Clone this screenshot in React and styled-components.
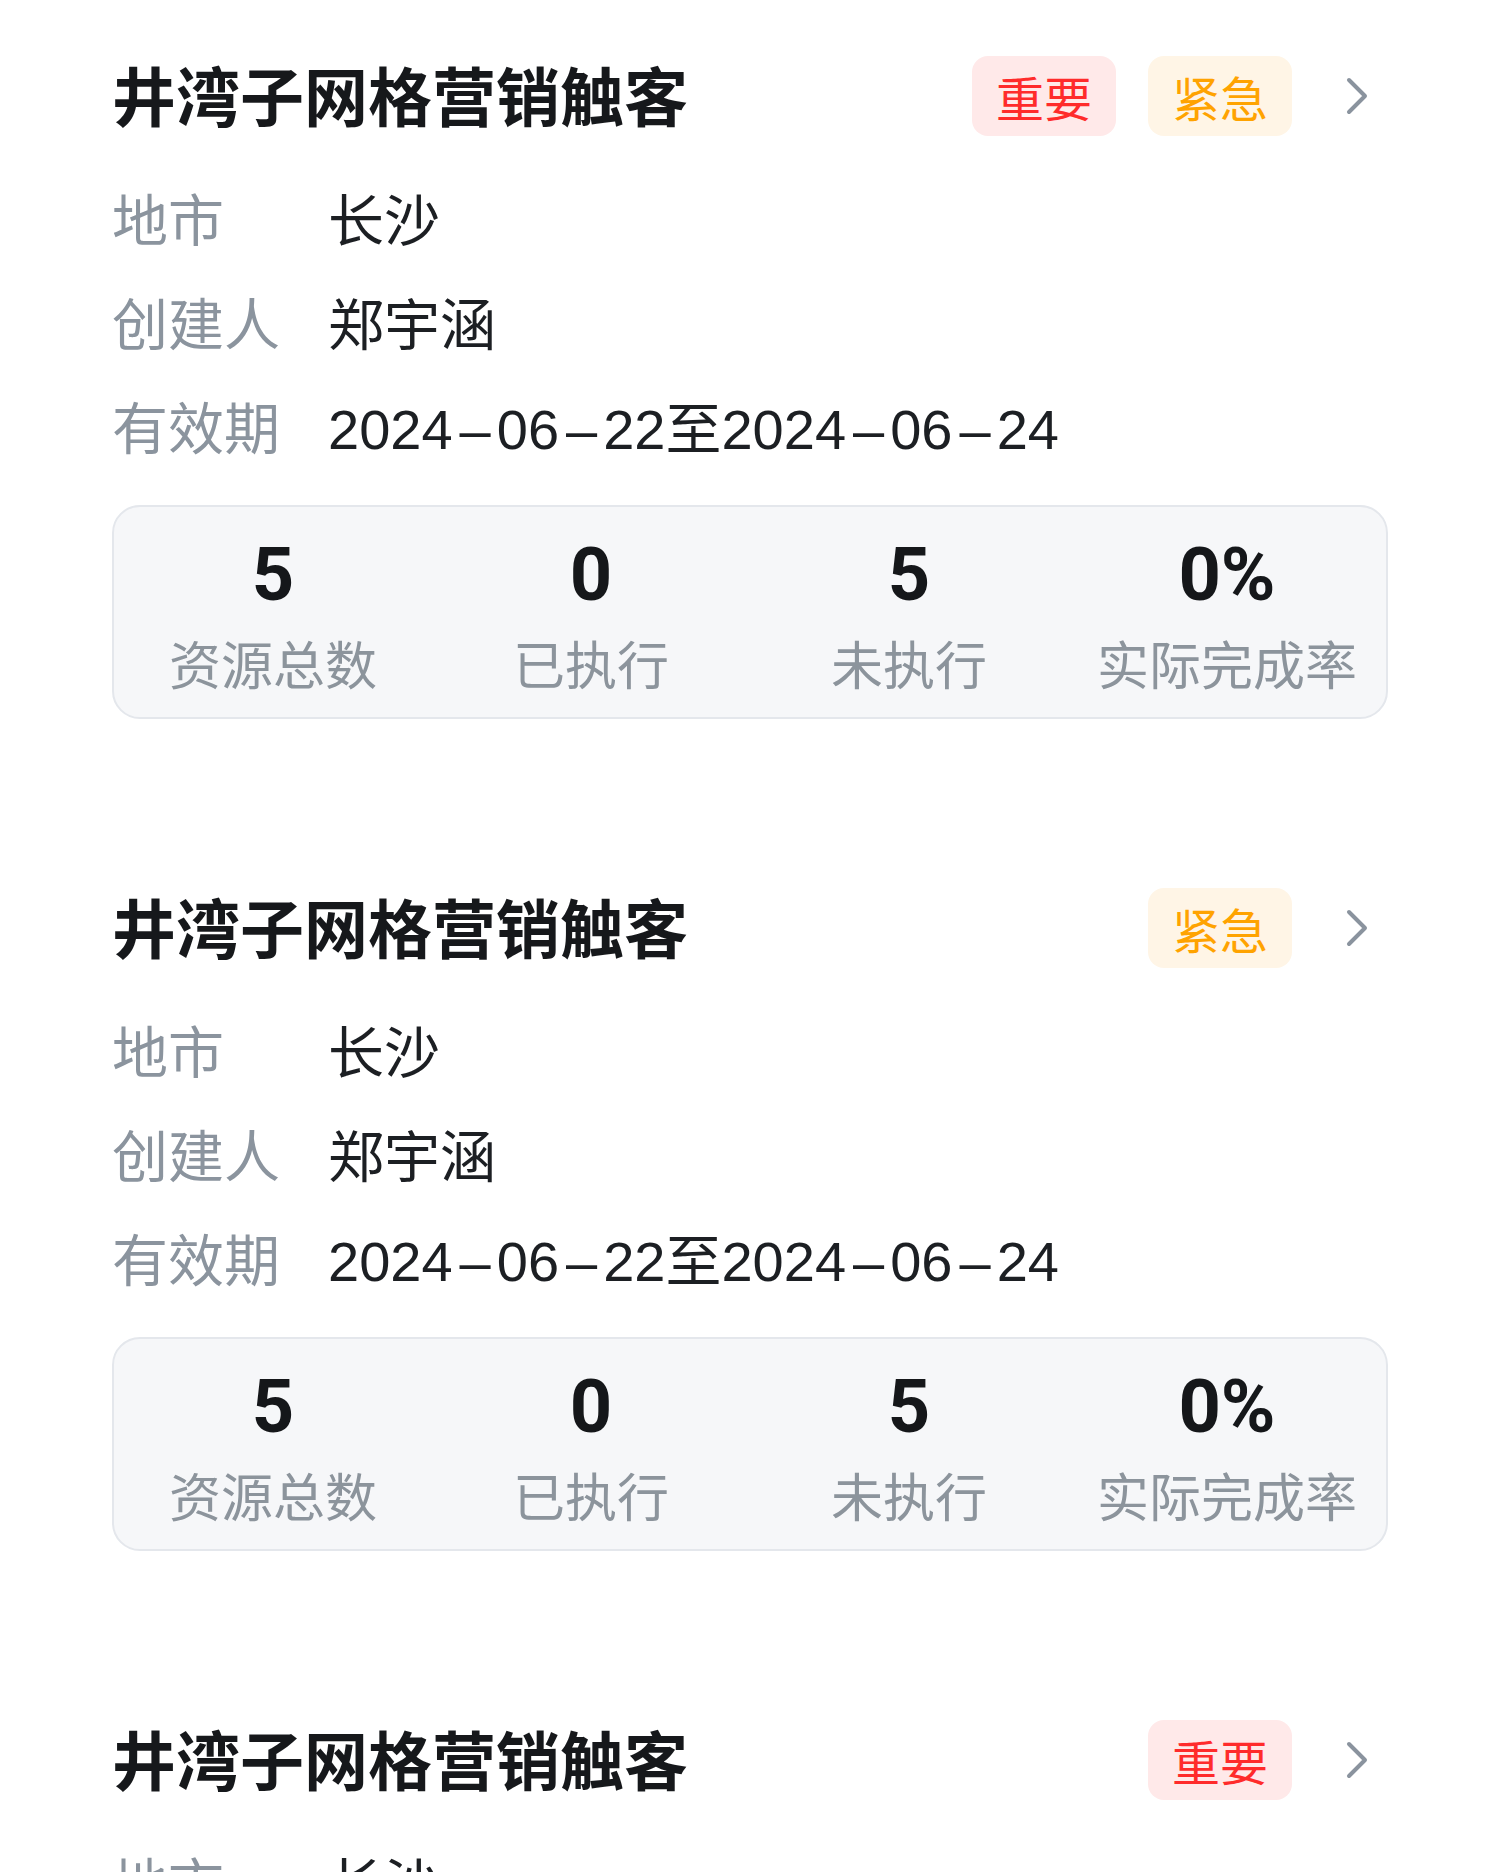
import React from "react";
import styled, { createGlobalStyle } from "styled-components";
import { ChevronRight } from "lucide-react";

const GlobalStyle = createGlobalStyle`
  html, body {
    margin: 0;
    padding: 0;
    background: #ffffff;
    scrollbar-width: none;
  }
  html::-webkit-scrollbar, body::-webkit-scrollbar {
    display: none;
  }
  body {
    font-family: "Liberation Sans", "Noto Sans CJK SC", sans-serif;
    -webkit-font-smoothing: antialiased;
  }
`;

const tasks = [
  {
    id: 1,
    title: "井湾子网格营销触客",
    tags: ["important", "urgent"],
    city: "长沙",
    creator: "郑宇涵",
    period: "2024-06-22至2024-06-24",
    total: 5,
    done: 0,
    todo: 5,
    rate: "0%",
  },
  {
    id: 2,
    title: "井湾子网格营销触客",
    tags: ["urgent"],
    city: "长沙",
    creator: "郑宇涵",
    period: "2024-06-22至2024-06-24",
    total: 5,
    done: 0,
    todo: 5,
    rate: "0%",
  },
  {
    id: 3,
    title: "井湾子网格营销触客",
    tags: ["important"],
    city: "长沙",
    creator: "郑宇涵",
    period: "2024-06-22至2024-06-24",
    total: 5,
    done: 0,
    todo: 5,
    rate: "0%",
  },
];

const tagInfo = {
  important: { text: "重要", color: "#ff2b2b", bg: "#ffe9e9" },
  urgent: { text: "紧急", color: "#ffa300", bg: "#fff5e6" },
};

const List = styled.div`
  display: flex;
  flex-direction: column;
`;

const Card = styled.div`
  display: flex;
  flex-direction: column;
  padding: 56px 112px 113px;
`;

const Header = styled.div`
  display: flex;
  align-items: center;
  height: 80px;
`;

const Title = styled.div`
  flex: 1;
  margin-bottom: 6px;
  font-family: "Noto Sans CJK SC", sans-serif;
  font-size: 64px;
  font-weight: 700;
  line-height: 80px;
  color: #16181b;
`;

const Tags = styled.div`
  display: flex;
  gap: 32px;
`;

const Tag = styled.span`
  display: inline-flex;
  align-items: center;
  justify-content: center;
  height: 80px;
  padding: 0 24px;
  border-radius: 16px;
  font-family: "Noto Sans CJK SC", sans-serif;
  font-size: 48px;
  color: ${(p) => p.$color};
  background: ${(p) => p.$bg};
`;

const Arrow = styled.div`
  display: flex;
  margin-left: 33px;
  margin-right: -1px;
  color: #8a939e;
`;

const Fields = styled.div`
  display: flex;
  flex-direction: column;
  gap: 16px;
  margin-top: 42px;
`;

const Field = styled.div`
  display: flex;
  align-items: baseline;
  font-family: "Liberation Sans", "Noto Sans CJK SC", sans-serif;
  font-size: 56px;
  line-height: 88px;
`;

const Label = styled.span`
  width: 216px;
  flex-shrink: 0;
  color: #8b949e;
`;

const Value = styled.span`
  color: #1c1f23;
`;

const Dash = styled.span`
  margin: 0 6px 0 7px;
`;

const Stats = styled.div`
  display: grid;
  grid-template-columns: repeat(4, 1fr);
  margin-top: 31px;
  padding: 26px 0 17px;
  border: 2px solid #e4e7ec;
  border-radius: 28px;
  background: #f6f7f9;
`;

const Stat = styled.div`
  display: flex;
  flex-direction: column;
  align-items: center;
  gap: 9px;
`;

const Num = styled.div`
  font-family: "Roboto", "Liberation Sans", sans-serif;
  font-weight: 700;
  font-size: 74px;
  line-height: 84px;
  color: #15171a;
`;

const StatLabel = styled.div`
  font-family: "Noto Sans CJK SC", sans-serif;
  font-size: 52px;
  line-height: 74px;
  color: #8c949c;
`;

const DateText = ({ text }) => {
  const parts = text.split("-");
  return parts.map((part, i) => (
    <React.Fragment key={i}>
      {i > 0 && <Dash>–</Dash>}
      {part}
    </React.Fragment>
  ));
};

const TaskCard = ({ task }) => (
  <Card>
    <Header>
      <Title>{task.title}</Title>
      <Tags>
        {task.tags.map((t) => (
          <Tag key={t} $color={tagInfo[t].color} $bg={tagInfo[t].bg}>
            {tagInfo[t].text}
          </Tag>
        ))}
      </Tags>
      <Arrow>
        <ChevronRight size={64} strokeWidth={1.5} />
      </Arrow>
    </Header>
    <Fields>
      <Field>
        <Label>地市</Label>
        <Value>{task.city}</Value>
      </Field>
      <Field>
        <Label>创建人</Label>
        <Value>{task.creator}</Value>
      </Field>
      <Field>
        <Label>有效期</Label>
        <Value>
          <DateText text={task.period} />
        </Value>
      </Field>
    </Fields>
    <Stats>
      <Stat>
        <Num>{task.total}</Num>
        <StatLabel>资源总数</StatLabel>
      </Stat>
      <Stat>
        <Num>{task.done}</Num>
        <StatLabel>已执行</StatLabel>
      </Stat>
      <Stat>
        <Num>{task.todo}</Num>
        <StatLabel>未执行</StatLabel>
      </Stat>
      <Stat>
        <Num>{task.rate}</Num>
        <StatLabel>实际完成率</StatLabel>
      </Stat>
    </Stats>
  </Card>
);

export default function App() {
  return (
    <>
      <GlobalStyle />
      <List>
        {tasks.map((task) => (
          <TaskCard key={task.id} task={task} />
        ))}
      </List>
    </>
  );
}
